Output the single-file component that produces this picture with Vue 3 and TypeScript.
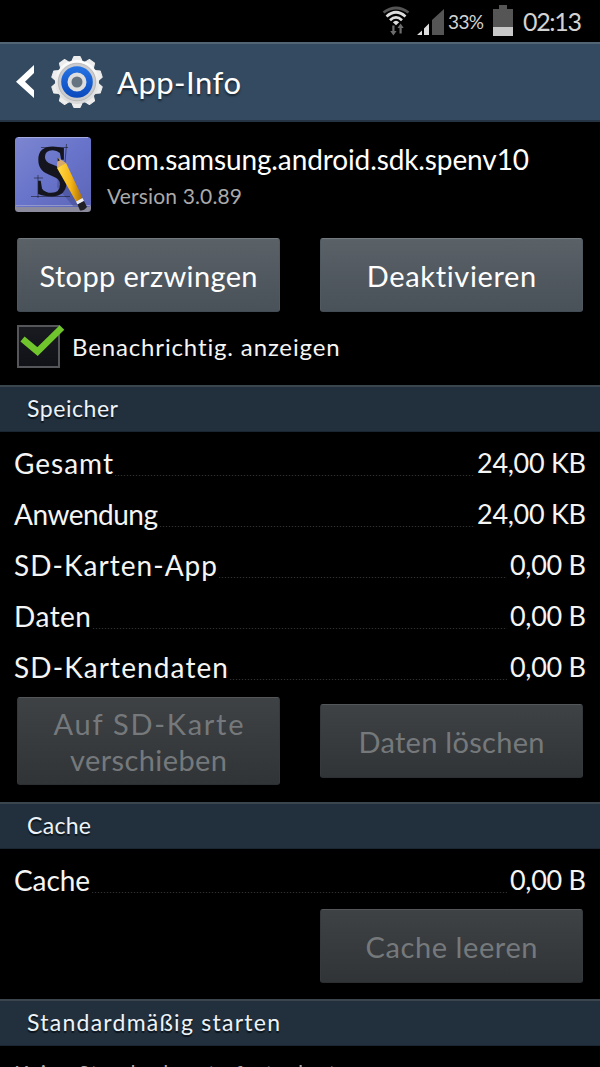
<script setup lang="ts">
interface Entry {
  label: string
  labelWidth: number
  value: string
  valueWidth: number
}

const storage: Entry[] = [
  { label: 'Gesamt', labelWidth: 99, value: '24,00 KB', valueWidth: 109 },
  { label: 'Anwendung', labelWidth: 144, value: '24,00 KB', valueWidth: 109 },
  { label: 'SD-Karten-App', labelWidth: 203, value: '0,00 B', valueWidth: 76 },
  { label: 'Daten', labelWidth: 77, value: '0,00 B', valueWidth: 76 },
  { label: 'SD-Kartendaten', labelWidth: 214, value: '0,00 B', valueWidth: 76 },
]
const cache: Entry[] = [
  { label: 'Cache', labelWidth: 76, value: '0,00 B', valueWidth: 76 },
]

const teeth = Array.from({ length: 10 }, (_, i) => i * 36)

// Tracks a label out (or in) so that it spans the given width.
const vFit = {
  mounted(el: HTMLElement, binding: { value: number }) {
    const count = (el.textContent ?? '').trim().length
    const natural = el.getBoundingClientRect().width
    const gap = (binding.value - natural) / (count - 1)
    el.style.letterSpacing = `${gap}px`
    el.style.marginRight = `${-gap}px`
  },
}
</script>

<template>
  <div class="screen">
    <div class="status">
      <svg class="wifi" width="28" height="32" viewBox="0 0 28 32">
        <g fill="none" stroke-width="2.700">
          <path d="M1.500 7.500Q14-1.500 26.500 7.500" stroke="#555" />
          <path d="M4.500 11.500Q14 3 23.500 11.500" stroke="#ddd" />
          <path d="M8 15.300Q14 9.500 20 15.300" stroke="#ddd" />
        </g>
        <path d="M10.800 17.300Q14 14.300 17.200 17.300L14 20.300Z" fill="#ddd" />
        <path d="M10.300 20.500h2.200v5.500h2.100l-3.200 4.500-3.200-4.500h2.100zM17.500 28.500v-5.500h-2l3.100-4.500 3.100 4.500h-2v5.500z" fill="#6c6c6c" />
      </svg>
      <svg class="signal" width="27" height="28" viewBox="0 0 27 28">
        <path d="M15 12L27 1V27H15z" fill="#555" />
        <path d="M0 27l5-4.500V27zM7 20.500l5-5V27H7z" fill="#ddd" />
      </svg>
      <span class="percent"><span v-fit="36">33%</span></span>
      <svg class="battery" width="20" height="31" viewBox="0 0 20 31">
        <path d="M0 4h6V0h8v4h6v18H0z" fill="#555" />
        <path d="M0 22h20v9H0z" fill="#c8c8c8" />
      </svg>
      <span class="clock"><span v-fit="59">02:13</span></span>
    </div>

    <header class="bar">
      <svg class="back" width="19" height="34" viewBox="0 0 19 34">
        <path d="M18 0v8L9 16.800l9 8.500V33L0 16.800z" fill="#fff" />
      </svg>
      <svg class="gear" width="54" height="54" viewBox="-27 -27 54 54">
        <defs>
          <linearGradient id="metal" x1="0" y1="0" x2="0" y2="1">
            <stop offset="0" stop-color="#fff" />
            <stop offset="1" stop-color="#d8d8d8" />
          </linearGradient>
          <linearGradient id="blue" x1="0" y1="0" x2="0" y2="1">
            <stop offset="0" stop-color="#2674e4" />
            <stop offset="1" stop-color="#0a49bd" />
          </linearGradient>
        </defs>
        <path
          v-for="angle in teeth"
          :key="angle"
          d="M-5.500-20L-3.200-25.500H3.200L5.500-20z"
          fill="#ededed"
          stroke="#ededed"
          stroke-linejoin="round"
          :transform="`rotate(${angle})`"
        />
        <circle r="22" fill="url(#metal)" />
        <circle r="18.800" fill="#c9cbce" stroke="#aaa" stroke-width=".7" />
        <circle r="15.800" fill="url(#blue)" />
        <circle r="7.500" fill="#667482" stroke="#dedede" stroke-width="4" />
      </svg>
      <h1><span v-fit="124">App-Info</span></h1>
    </header>

    <section class="app">
      <svg class="icon" width="76" height="76" viewBox="0 0 76 76">
        <defs>
          <linearGradient id="pad" x1="0" y1="0" x2="1" y2="1">
            <stop offset="0" stop-color="#7c86d0" />
            <stop offset=".5" stop-color="#6874ca" />
            <stop offset="1" stop-color="#5d66b8" />
          </linearGradient>
          <linearGradient id="wood" x1="0" y1="0" x2="1" y2="0">
            <stop offset="0" stop-color="#ffdc4a" />
            <stop offset=".55" stop-color="#f5b517" />
            <stop offset="1" stop-color="#a96b05" />
          </linearGradient>
        </defs>
        <rect y="2" width="76" height="73" rx="3.500" fill="#8b8b9d" />
        <rect width="76" height="70" rx="3.500" fill="url(#pad)" />
        <path d="M1 68.500H75" stroke="#9298cc" />
        <path d="M3 .5H73" stroke="#a3abe0" />
        <path d="M44 30L69 70 58 69 42 50z" fill="#3c4488" opacity=".45" />
        <text class="letter" transform="translate(37 59) scale(.84 1)" text-anchor="middle">S</text>
        <path d="M51.500 7L50 26M23 38V61M16 59.500H55M26 10.500H53M19 41H28" fill="none" stroke="#15151f" stroke-width=".8" opacity=".7" />
        <path d="M42.500 20.500L42 31 46 29 51 26z" fill="#d7a96b" />
        <path d="M42.500 20.500v4l2.500-1.300z" fill="#222" />
        <path d="M42 31L51 26 67.500 61 61 64.500z" fill="url(#wood)" />
        <path d="M61 64.500L67.500 61 69 64 62.500 67.500z" fill="#ececec" />
        <path d="M62.500 67.500L69 64 72 70Q69 74 65 73.500z" fill="#202024" />
      </svg>
      <div class="names">
        <div class="package"><span v-fit="422">com.samsung.android.sdk.spenv10</span></div>
        <div class="version"><span v-fit="135">Version 3.0.89</span></div>
      </div>
    </section>

    <div class="buttons top">
      <button><span v-fit="218">Stopp erzwingen</span></button>
      <button><span v-fit="170">Deaktivieren</span></button>
    </div>

    <label class="notify">
      <span class="box">
        <svg width="46" height="44" viewBox="0 0 46 44">
          <path d="M3.500 14L18.500 26.500 43 2.500" fill="none" stroke="#6fc52b" stroke-width="6.500" />
        </svg>
      </span>
      <span v-fit="268">Benachrichtig. anzeigen</span>
    </label>

    <h2><span v-fit="91">Speicher</span></h2>
    <div class="rows storage">
      <div v-for="row in storage" :key="row.label" class="row">
        <span v-fit="row.labelWidth">{{ row.label }}</span>
        <i class="leader"></i>
        <span v-fit="row.valueWidth" class="value">{{ row.value }}</span>
      </div>
    </div>
    <div class="buttons middle">
      <button disabled class="tall">
        <span v-fit="190">Auf SD-Karte</span>
        <span v-fit="157">verschieben</span>
      </button>
      <button disabled><span v-fit="186">Daten löschen</span></button>
    </div>

    <h2><span v-fit="64">Cache</span></h2>
    <div class="rows">
      <div v-for="row in cache" :key="row.label" class="row">
        <span v-fit="row.labelWidth">{{ row.label }}</span>
        <i class="leader"></i>
        <span v-fit="row.valueWidth" class="value">{{ row.value }}</span>
      </div>
    </div>
    <div class="buttons bottom">
      <button disabled><span v-fit="172">Cache leeren</span></button>
    </div>

    <h2><span v-fit="253">Standardmäßig starten</span></h2>
    <p class="defaults"><span v-fit="328">Keine Standardwerte festgelegt.</span></p>
  </div>
</template>

<style>
body {
  background: #000;
}
</style>

<style scoped>
.screen {
  width: 600px;
  height: 1067px;
  overflow: hidden;
  background: #000;
  color: #f5f5f5;
  font-family: Lato, "Open Sans", sans-serif;
  white-space: nowrap;
}
.screen * {
  box-sizing: border-box;
}
h1,
h2,
p {
  margin: 0;
  font-weight: 400;
}
span {
  display: inline-block;
}
.status {
  display: flex;
  height: 42px;
  padding-left: 382px;
  color: #d2d2d2;
}
.wifi {
  margin-top: 5px;
}
.signal {
  margin: 8px 0 0 7px;
}
.percent {
  width: 38px;
  margin-left: 4px;
  font-size: 19px;
  line-height: 44px;
}
.battery {
  margin: 5px 0 0 7px;
}
.clock {
  margin-left: 10px;
  font-size: 25px;
  line-height: 43px;
}
.bar {
  display: flex;
  align-items: center;
  height: 80px;
  padding: 0 0 0 16px;
  border-top: 2px solid #526575;
  border-bottom: 2px solid #243442;
  background: #344a60;
  text-shadow: 0 2px 2px #1a2733;
}
.gear {
  margin-left: 15px;
}
h1 {
  margin-left: 13px;
  color: #fff;
  font-size: 31px;
  line-height: 80px;
}
.app {
  display: flex;
  height: 116px;
  padding: 15px 0 0 15px;
}
.letter {
  fill: #15151f;
  font: bold 74px "Liberation Serif", serif;
}
.names {
  margin-left: 16px;
}
.package {
  height: 42px;
  color: #fff;
  font-size: 28px;
  line-height: 44px;
}
.version {
  height: 34px;
  color: #aaa;
  font-size: 21px;
  line-height: 34px;
}
.buttons {
  display: flex;
  align-items: center;
  justify-content: space-between;
  padding: 0 17px;
}
button {
  display: flex;
  flex-direction: column;
  align-items: center;
  justify-content: center;
  width: 263px;
  height: 74px;
  padding: 1px 0 0;
  border: 1px solid #505960;
  border-top-color: #727a80;
  border-bottom-color: #424c55;
  border-radius: 3px;
  background: linear-gradient(#5a6167, #495159);
  color: #fff;
  font-family: inherit;
  font-size: 29px;
  line-height: 36px;
}
button:disabled {
  border-color: #35393c;
  border-top-color: #53575a;
  border-bottom-color: #2b2f32;
  background: linear-gradient(#3e4245, #303437);
  color: #76797b;
}
button.tall {
  height: 88px;
}
.notify {
  display: flex;
  align-items: center;
  height: 73px;
  padding: 0 0 4px 17px;
  font-size: 24px;
}
.box {
  width: 43px;
  height: 43px;
  margin-right: 12px;
  border: 2px solid #55565a;
  background: linear-gradient(#1a1b21, #111217);
}
.box svg {
  display: block;
  margin-top: -2px;
}
h2 {
  height: 47px;
  padding-left: 27px;
  border-top: 2px solid #3a454d;
  border-bottom: 1px solid #1a2631;
  background: #22303d;
  color: #edf3f8;
  font-size: 23px;
  line-height: 42px;
  text-shadow: 0 2px 1px #0c141b;
}
.rows {
  padding: 4px 14px 0;
}
.row {
  display: flex;
  height: 51px;
  font-size: 28px;
  line-height: 54px;
}
.value {
  font-size: 27px;
}
.leader {
  flex: 1;
  height: 1px;
  margin: 39px 3px 0 2px;
  background: repeating-linear-gradient(90deg, #303030 0 1px, #080808 1px 3px);
}
.middle {
  height: 111px;
  padding-bottom: 11px;
}
.bottom {
  height: 95px;
  padding-bottom: 11px;
  justify-content: flex-end;
}
.defaults {
  height: 50px;
  padding-left: 14px;
  color: #aaa;
  font-size: 22px;
  line-height: 54px;
}
</style>
